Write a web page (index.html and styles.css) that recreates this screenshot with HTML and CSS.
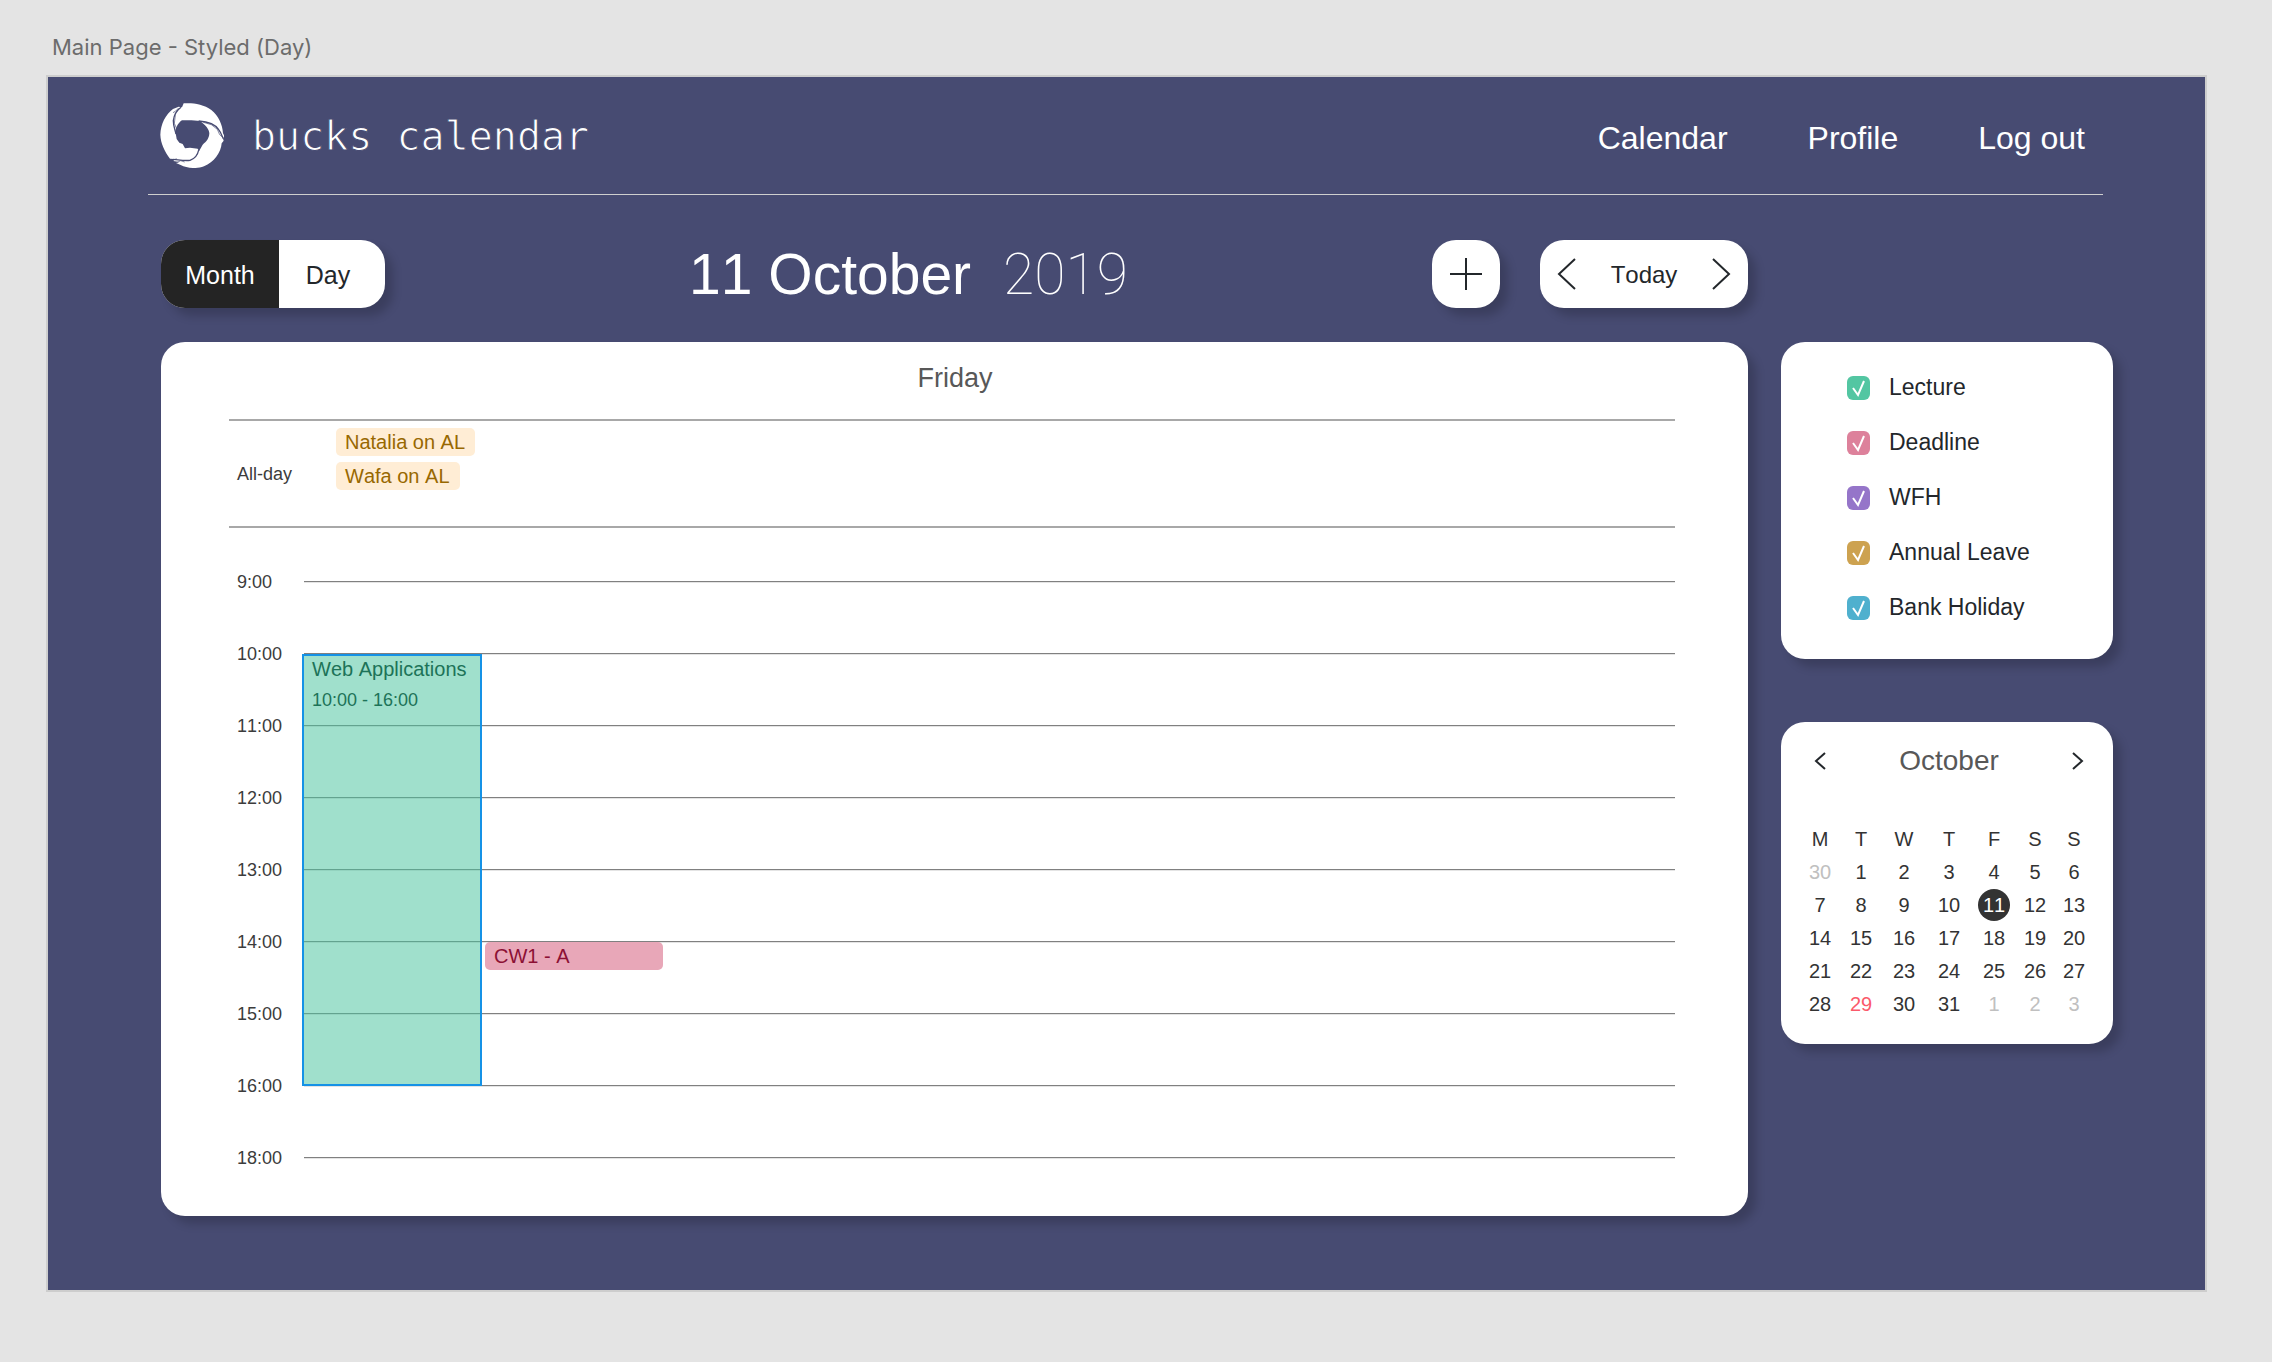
FILE: index.html
```html
<!DOCTYPE html>
<html lang="en">
<head>
<meta charset="utf-8">
<meta name="viewport" content="width=device-width, initial-scale=1">
<title>Bucks Calendar</title>
<link rel="stylesheet" href="styles.css">
</head>
<body>
<p class="board-label">Main Page - Styled (Day)</p>
<div class="board">
  <header class="header">
    <div class="brand">
      <svg class="brand-logo" viewBox="30 39 192 195" aria-hidden="true">
        <path class="logo-ring" fill-rule="evenodd" d="M101 40 C128 38 160 42 184 60 C205 77 218 104 219 130 L223 138 L219 146 L221 152 L215 160 C213 188 192 217 162 229 C138 238 110 234 92 225 L78 219 L88 216 L70 213 L74 207 L60 206 C44 184 32 160 31 134 C32 102 47 73 69 57 L86 50 L96 52 Z M80 147 L88 158 L98 162 L105 175 L120 173 L143 176 L147 184 L158 164 C170 154 177 146 178 130 C178 118 166 104 150 93 C134 90 112 90 96 91 C86 97 78 110 76 124 Z"/>
        <path class="logo-cut" d="M93 52 C82 60 72 74 70 92 C70 108 74 116 78 132"/>
        <path class="logo-cut logo-cut-fine" d="M86 54 L76 64 L69 68 M76 76 L73 100 L79 114"/>
        <path class="logo-cut" d="M146 93 C174 95 196 103 206 119 C213 128 216 138 220 146"/>
        <path class="logo-cut logo-cut-fine" d="M160 97 L184 104 L202 118 L209 134 L216 140"/>
        <path class="logo-cut" d="M146 180 C143 196 134 206 120 211 C103 213 90 210 70 208"/>
        <path class="logo-cut logo-cut-fine" d="M80 218 L92 212 L104 216 M66 212 L80 206"/>
      </svg>
      <span class="brand-name">bucks calendar</span>
    </div>
    <nav class="nav">
      <a href="#calendar">Calendar</a>
      <a href="#profile">Profile</a>
      <a href="#logout">Log out</a>
    </nav>
  </header>

  <main class="content">
    <div class="toolbar">
      <div class="toggle">
        <button class="toggle-option toggle-active" type="button">Month</button>
        <button class="toggle-option" type="button">Day</button>
      </div>
      <h1 class="date">11 October <span class="year">2019</span></h1>
      <button class="add" type="button" aria-label="Add event">
        <svg width="32" height="32" viewBox="0 0 32 32"><path d="M16 0V32M0 16H32"/></svg>
      </button>
      <div class="stepper">
        <button class="step" type="button" aria-label="Previous day">
          <svg width="20" height="32" viewBox="0 0 20 32"><path d="M18 1L2 16L18 31"/></svg>
        </button>
        <button class="today" type="button">Today</button>
        <button class="step" type="button" aria-label="Next day">
          <svg width="20" height="32" viewBox="0 0 20 32"><path d="M2 1L18 16L2 31"/></svg>
        </button>
      </div>
    </div>

    <section class="card day">
      <h2 class="day-name">Friday</h2>
      <div class="all-day">
        <span class="time">All-day</span>
        <div class="all-day-events">
          <span class="chip">Natalia on AL</span>
          <span class="chip">Wafa on AL</span>
        </div>
      </div>
      <div class="hours">
        <div class="hour"><span class="time">9:00</span><span class="rule"></span></div>
        <div class="hour"><span class="time">10:00</span><span class="rule"></span></div>
        <div class="hour"><span class="time">11:00</span><span class="rule"></span></div>
        <div class="hour"><span class="time">12:00</span><span class="rule"></span></div>
        <div class="hour"><span class="time">13:00</span><span class="rule"></span></div>
        <div class="hour"><span class="time">14:00</span><span class="rule"></span></div>
        <div class="hour"><span class="time">15:00</span><span class="rule"></span></div>
        <div class="hour"><span class="time">16:00</span><span class="rule"></span></div>
        <div class="hour"><span class="time">18:00</span><span class="rule"></span></div>
        <article class="event event-lecture">
          <h3 class="event-title">Web Applications</h3>
          <p class="event-time">10:00 - 16:00</p>
        </article>
        <article class="event event-deadline">
          <h3 class="event-title">CW1 - A</h3>
        </article>
      </div>
    </section>

    <aside class="side">
      <section class="card legend">
        <label class="filter"><input class="check check-lecture" type="checkbox" checked>Lecture</label>
        <label class="filter"><input class="check check-deadline" type="checkbox" checked>Deadline</label>
        <label class="filter"><input class="check check-wfh" type="checkbox" checked>WFH</label>
        <label class="filter"><input class="check check-leave" type="checkbox" checked>Annual Leave</label>
        <label class="filter"><input class="check check-holiday" type="checkbox" checked>Bank Holiday</label>
      </section>

      <section class="card mini">
        <div class="mini-head">
          <button class="mini-step" type="button" aria-label="Previous month">
            <svg width="12" height="20" viewBox="0 0 12 20"><path d="M11 2L2 10L11 18"/></svg>
          </button>
          <h2 class="mini-month">October</h2>
          <button class="mini-step" type="button" aria-label="Next month">
            <svg width="12" height="20" viewBox="0 0 12 20"><path d="M1 2L10 10L1 18"/></svg>
          </button>
        </div>
        <table class="month">
          <colgroup><col class="col-m"><col class="col-t"><col class="col-w"><col class="col-th"><col class="col-f"><col class="col-s"><col class="col-su"></colgroup>
          <thead>
            <tr><th>M</th><th>T</th><th>W</th><th>T</th><th>F</th><th>S</th><th>S</th></tr>
          </thead>
          <tbody>
            <tr><td class="outside">30</td><td>1</td><td>2</td><td>3</td><td>4</td><td>5</td><td>6</td></tr>
            <tr><td>7</td><td>8</td><td>9</td><td>10</td><td><span class="selected">11</span></td><td>12</td><td>13</td></tr>
            <tr><td>14</td><td>15</td><td>16</td><td>17</td><td>18</td><td>19</td><td>20</td></tr>
            <tr><td>21</td><td>22</td><td>23</td><td>24</td><td>25</td><td>26</td><td>27</td></tr>
            <tr><td>28</td><td class="marked">29</td><td>30</td><td>31</td><td class="outside">1</td><td class="outside">2</td><td class="outside">3</td></tr>
          </tbody>
        </table>
      </section>
    </aside>
  </main>
</div>
</body>
</html>
```
FILE: styles.css
```css
* {
  box-sizing: border-box;
}

body {
  margin: 0;
  padding: 31px 67px 72px 48px;
  background: #e4e4e4;
  color: #23272b;
  font-family: "Liberation Sans", Arial, sans-serif;
  font-kerning: none;
}

h1, h2, h3, p {
  margin: 0;
  font-weight: 400;
}

button {
  padding: 0;
  border: 0;
  background: none;
  color: inherit;
  font: inherit;
}

svg {
  display: block;
  fill: none;
  stroke: #23272b;
  stroke-width: 2;
}

.board-label {
  padding-left: 4px;
  margin-bottom: 14px;
  color: #6c6c6c;
  font: 22px/32px Inter, sans-serif;
}

.board {
  background: #474b72;
  box-shadow: 0 0 0 2px #cdcdcd;
  padding-bottom: 74px;
}

/* Header */

.header {
  display: flex;
  justify-content: space-between;
  align-items: center;
  height: 118px;
  margin: 0 102px 0 100px;
  padding: 0 18px 0 12px;
  border-bottom: 1px solid #cfcfcf;
}

.brand {
  display: flex;
  align-items: center;
  gap: 28px;
}

.brand-logo {
  width: 64px;
  height: 65px;
}

.logo-ring {
  fill: #fff;
  stroke: none;
}

.logo-cut {
  stroke: #474b72;
  stroke-width: 4;
}

.logo-cut-fine {
  stroke-width: 2;
}

.brand-name {
  color: #fff;
  font: 40px/48px "DejaVu Sans Mono", monospace;
  -webkit-text-stroke: 1px #474b72;
}

.nav {
  display: flex;
  gap: 80px;
  padding-top: 5px;
}

.nav a {
  color: #fff;
  font-size: 32px;
  line-height: 36px;
  text-decoration: none;
}

/* Page grid */

.content {
  display: grid;
  grid-template-columns: minmax(0, 1fr) 332px;
  column-gap: 33px;
  row-gap: 34px;
  align-items: start;
  padding: 45px 92px 0 113px;
}

.card {
  background: #fff;
  border-radius: 24px;
  box-shadow: 8px 8px 10px rgba(0, 0, 0, 0.18);
}

/* Toolbar */

.toolbar {
  grid-area: 1 / 1;
  display: flex;
  align-items: center;
  height: 68px;
  font-size: 24px;
}

.toggle, .add, .stepper {
  height: 68px;
  border-radius: 24px;
  background: #fff;
  box-shadow: 8px 8px 10px rgba(0, 0, 0, 0.18);
}

.toggle {
  display: flex;
  width: 224px;
  font-size: 25px;
}

.toggle-option {
  flex: 1;
  padding: 2px 8px 0 0;
}

.toggle-active {
  flex: 0 0 118px;
  padding: 2px 0 0;
  border-radius: 24px 0 0 24px;
  background: #242424;
  color: #fff;
}

.date {
  flex: 1;
  display: flex;
  justify-content: center;
  align-items: baseline;
  gap: 32px;
  color: #fff;
  font-size: 57px;
  line-height: 64px;
}

.year {
  font-family: Roboto, sans-serif;
  font-weight: 100;
}

.add {
  display: flex;
  justify-content: center;
  align-items: center;
  width: 68px;
  margin-right: 40px;
}

.stepper {
  display: flex;
  width: 208px;
}

.step {
  display: flex;
  justify-content: center;
  align-items: center;
  width: 54px;
}

.today {
  flex: 1;
  padding-top: 2px;
}

/* Day view */

.day {
  grid-area: 2 / 1;
  padding: 0 73px 22px 68px;
}

.day-name {
  padding: 0 0 5px 6px;
  color: #585858;
  font-size: 27px;
  line-height: 72px;
  text-align: center;
}

.all-day {
  display: flex;
  align-items: center;
  height: 109px;
  border: solid #a8a8a8;
  border-width: 2px 0;
}

.time {
  flex: none;
  width: 75px;
  padding-left: 8px;
  color: #3c3c3c;
  font-size: 18px;
  line-height: 20px;
}

.all-day-events {
  align-self: start;
  display: flex;
  flex-direction: column;
  align-items: flex-start;
  gap: 6px;
  padding: 7px 0 0 32px;
}

.chip {
  padding: 0 10px 0 9px;
  border-radius: 5px;
  background: #ffedd5;
  color: #986801;
  font-size: 20px;
  line-height: 28px;
}

.hours {
  position: relative;
  padding-top: 18px;
}

.hour {
  display: flex;
  align-items: center;
  height: 72px;
}

.rule {
  flex: 1;
  height: 2px;
  background: linear-gradient(#808080 50%, #e4e4e4 50%);
}

/* Events lie over the hour rules */

.event {
  position: absolute;
}

.event-title {
  font-size: 20px;
  line-height: 28px;
}

.event-lecture {
  top: 126px;
  left: 73px;
  width: 180px;
  height: 432px;
  padding-left: 8px;
  border: 2px solid #1592e6;
  background: rgba(72, 195, 157, 0.52);
  color: #1d7358;
}

.event-lecture .event-title {
  line-height: 26px;
}

.event-time {
  font-size: 18px;
  line-height: 36px;
}

.event-deadline {
  top: 414px;
  left: 256px;
  width: 178px;
  padding-left: 9px;
  border-radius: 5px;
  background: #e8a7b8;
  color: #8c1034;
}

/* Filters */

.side {
  grid-area: 2 / 2;
  display: grid;
  gap: 63px;
}

.legend {
  padding: 18px 24px 24px 66px;
}

.filter {
  display: flex;
  align-items: center;
  gap: 19px;
  height: 55px;
  font-size: 23px;
}

.check {
  appearance: none;
  width: 23px;
  height: 24px;
  margin: 0;
  border-radius: 6px;
}

.check:checked {
  background-image: url("data:image/svg+xml,%3Csvg xmlns='http://www.w3.org/2000/svg' viewBox='0 0 23 24'%3E%3Cpath d='M6 12L11 19L17 5' fill='none' stroke='white' stroke-width='2'/%3E%3C/svg%3E");
}

.check-lecture { background-color: #53c6a2; }
.check-deadline { background-color: #dd819b; }
.check-wfh { background-color: #9575c9; }
.check-leave { background-color: #cda250; }
.check-holiday { background-color: #4fb0ce; }

/* Month picker */

.mini {
  padding: 0 19px 24px;
}

.mini-head {
  display: flex;
  justify-content: space-between;
  align-items: center;
  height: 78px;
  padding-left: 4px;
}

.mini-step {
  display: flex;
  justify-content: center;
  align-items: center;
  width: 32px;
  height: 32px;
}

.mini-month {
  color: #585858;
  font-size: 28px;
  line-height: 32px;
}

.month {
  width: 100%;
  margin-top: 22px;
  border-collapse: collapse;
  table-layout: fixed;
  color: #333;
  font-size: 20px;
  text-align: center;
}

.month th, .month td {
  height: 33px;
  padding: 0;
  font-weight: 400;
  line-height: 32px;
}

.col-m, .col-su { width: 40px; }
.col-t { width: 42px; }
.col-w, .col-f { width: 44px; }
.col-th { width: 46px; }
.col-s { width: 38px; }

.outside {
  color: #c0c0c0;
}

.marked {
  color: #fb5a6b;
}

.selected {
  display: block;
  width: 32px;
  margin: 0 auto;
  border-radius: 50%;
  background: #333;
  color: #fff;
}
```
